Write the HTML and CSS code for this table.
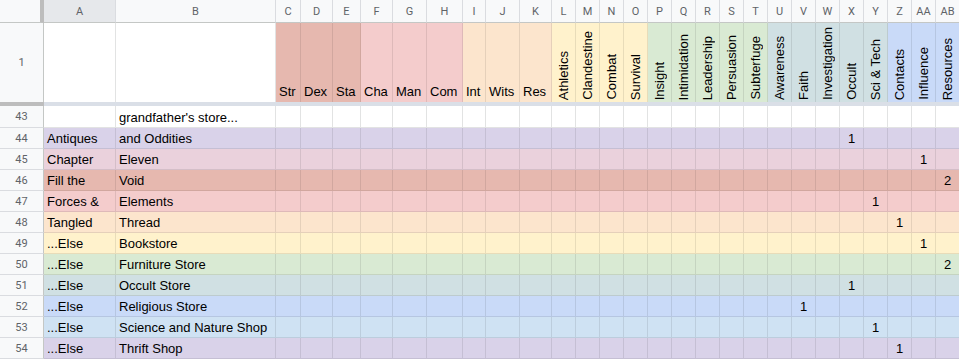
FILE: index.html
```html
<!DOCTYPE html>
<html>
<head>
<meta charset="utf-8">
<link rel="stylesheet" href="styles.css">
</head>
<body>
<div class="sheet">
  <div class="row cols colhead">
    <div class="corner"></div>
    <div class="sel">A</div><div>B</div><div>C</div><div>D</div><div>E</div><div>F</div><div>G</div><div>H</div><div>I</div><div>J</div><div>K</div><div>L</div><div>M</div><div>N</div><div>O</div><div>P</div><div>Q</div><div>R</div><div>S</div><div>T</div><div>U</div><div>V</div><div>W</div><div>X</div><div>Y</div><div>Z</div><div>AA</div><div>AB</div>
  </div>
  <div class="row cols r1">
    <div class="rh">1</div>
    <div class="blank"></div><div class="blank"></div>
    <div class="h phys"><span>Str</span></div><div class="h phys"><span>Dex</span></div><div class="h phys"><span>Sta</span></div>
    <div class="h soc"><span>Cha</span></div><div class="h soc"><span>Man</span></div><div class="h soc"><span>Com</span></div>
    <div class="h men"><span>Int</span></div><div class="h men"><span>Wits</span></div><div class="h men"><span>Res</span></div>
    <div class="v yel"><span>Athletics</span></div><div class="v yel"><span>Clandestine</span></div><div class="v yel"><span>Combat</span></div><div class="v yel"><span>Survival</span></div>
    <div class="v grn"><span>Insight</span></div><div class="v grn"><span>Intimidation</span></div><div class="v grn"><span>Leadership</span></div><div class="v grn"><span>Persuasion</span></div><div class="v grn"><span>Subterfuge</span></div>
    <div class="v cyn"><span>Awareness</span></div><div class="v cyn"><span>Faith</span></div><div class="v cyn"><span>Investigation</span></div><div class="v cyn"><span>Occult</span></div><div class="v cyn"><span>Sci &amp; Tech</span></div>
    <div class="v blu"><span>Contacts</span></div><div class="v blu"><span>Influence</span></div><div class="v blu"><span>Resources</span></div>
  </div>
  <div class="freeze"><div class="freeze-left"></div><div class="freeze-right"></div></div>
  <div class="row cols data r43 white">
    <div class="rh">43</div><div class="t"></div><div class="t">grandfather's store...</div>
    <div></div><div></div><div></div><div></div><div></div><div></div><div></div><div></div><div></div><div></div><div></div><div></div><div></div><div></div><div></div><div></div><div></div><div></div><div></div><div></div><div></div><div></div><div></div><div></div><div></div><div></div>
  </div>
  <div class="row cols data purple">
    <div class="rh">44</div><div class="t">Antiques</div><div class="t">and Oddities</div>
    <div></div><div></div><div></div><div></div><div></div><div></div><div></div><div></div><div></div><div></div><div></div><div></div><div></div><div></div><div></div><div></div><div></div><div></div><div></div><div></div><div></div><div class="n">1</div><div></div><div></div><div></div><div></div>
  </div>
  <div class="row cols data magenta">
    <div class="rh">45</div><div class="t">Chapter</div><div class="t">Eleven</div>
    <div></div><div></div><div></div><div></div><div></div><div></div><div></div><div></div><div></div><div></div><div></div><div></div><div></div><div></div><div></div><div></div><div></div><div></div><div></div><div></div><div></div><div></div><div></div><div></div><div class="n">1</div><div></div>
  </div>
  <div class="row cols data berry">
    <div class="rh">46</div><div class="t">Fill the</div><div class="t">Void</div>
    <div></div><div></div><div></div><div></div><div></div><div></div><div></div><div></div><div></div><div></div><div></div><div></div><div></div><div></div><div></div><div></div><div></div><div></div><div></div><div></div><div></div><div></div><div></div><div></div><div></div><div class="n">2</div>
  </div>
  <div class="row cols data red">
    <div class="rh">47</div><div class="t">Forces &amp;</div><div class="t">Elements</div>
    <div></div><div></div><div></div><div></div><div></div><div></div><div></div><div></div><div></div><div></div><div></div><div></div><div></div><div></div><div></div><div></div><div></div><div></div><div></div><div></div><div></div><div></div><div class="n">1</div><div></div><div></div><div></div>
  </div>
  <div class="row cols data orange">
    <div class="rh">48</div><div class="t">Tangled</div><div class="t">Thread</div>
    <div></div><div></div><div></div><div></div><div></div><div></div><div></div><div></div><div></div><div></div><div></div><div></div><div></div><div></div><div></div><div></div><div></div><div></div><div></div><div></div><div></div><div></div><div></div><div class="n">1</div><div></div><div></div>
  </div>
  <div class="row cols data yellow">
    <div class="rh">49</div><div class="t">...Else</div><div class="t">Bookstore</div>
    <div></div><div></div><div></div><div></div><div></div><div></div><div></div><div></div><div></div><div></div><div></div><div></div><div></div><div></div><div></div><div></div><div></div><div></div><div></div><div></div><div></div><div></div><div></div><div></div><div class="n">1</div><div></div>
  </div>
  <div class="row cols data green">
    <div class="rh">50</div><div class="t">...Else</div><div class="t">Furniture Store</div>
    <div></div><div></div><div></div><div></div><div></div><div></div><div></div><div></div><div></div><div></div><div></div><div></div><div></div><div></div><div></div><div></div><div></div><div></div><div></div><div></div><div></div><div></div><div></div><div></div><div></div><div class="n">2</div>
  </div>
  <div class="row cols data cyan">
    <div class="rh">51</div><div class="t">...Else</div><div class="t">Occult Store</div>
    <div></div><div></div><div></div><div></div><div></div><div></div><div></div><div></div><div></div><div></div><div></div><div></div><div></div><div></div><div></div><div></div><div></div><div></div><div></div><div></div><div></div><div class="n">1</div><div></div><div></div><div></div><div></div>
  </div>
  <div class="row cols data cornflower">
    <div class="rh">52</div><div class="t">...Else</div><div class="t">Religious Store</div>
    <div></div><div></div><div></div><div></div><div></div><div></div><div></div><div></div><div></div><div></div><div></div><div></div><div></div><div></div><div></div><div></div><div></div><div></div><div></div><div class="n">1</div><div></div><div></div><div></div><div></div><div></div><div></div>
  </div>
  <div class="row cols data blue">
    <div class="rh">53</div><div class="t">...Else</div><div class="t">Science and Nature Shop</div>
    <div></div><div></div><div></div><div></div><div></div><div></div><div></div><div></div><div></div><div></div><div></div><div></div><div></div><div></div><div></div><div></div><div></div><div></div><div></div><div></div><div></div><div></div><div class="n">1</div><div></div><div></div><div></div>
  </div>
  <div class="row cols data purple">
    <div class="rh">54</div><div class="t">...Else</div><div class="t">Thrift Shop</div>
    <div></div><div></div><div></div><div></div><div></div><div></div><div></div><div></div><div></div><div></div><div></div><div></div><div></div><div></div><div></div><div></div><div></div><div></div><div></div><div></div><div></div><div></div><div></div><div class="n">1</div><div></div><div></div>
  </div>
</div>
</body>
</html>
```
FILE: styles.css
```css
html, body {
  margin: 0;
  padding: 0;
  background: #ffffff;
}
body {
  width: 959px;
  height: 359px;
  overflow: hidden;
  font-family: "Liberation Sans", Arial, sans-serif;
  font-size: 13px;
  color: #000;
}
.sheet {
  width: 960px;
}
.cols {
  display: grid;
  grid-template-columns: 44px 72px 160px 25px 32px 28px 32px 34px 36px 23px 34px 32px repeat(17, 24px);
}
.row > div {
  box-sizing: border-box;
  min-width: 0;
  overflow: hidden;
  white-space: nowrap;
}

/* column letters */
.colhead {
  height: 23px;
  background: #f8f9fa;
}
.colhead > div {
  border-right: 1px solid #dadce0;
  border-bottom: 1px solid #c4c7c5;
  font-family: Roboto, "Liberation Sans", sans-serif;
  font-size: 11px;
  color: #5f6368;
  display: flex;
  align-items: center;
  justify-content: center;
}
.colhead > .corner {
  border-right: 4px solid #bdbdbd;
  border-bottom: 1px solid #c4c7c5;
}
.colhead > .sel {
  background: #e6e8eb;
}

/* row numbers */
.row > .rh {
  background: #f8f9fa;
  border-right: 1px solid #c4c7c5;
  border-bottom: 1px solid #dadce0;
  font-family: Roboto, "Liberation Sans", sans-serif;
  font-size: 11px;
  color: #5f6368;
  display: flex;
  align-items: center;
  justify-content: center;
}

/* row 1 (frozen header) */
.r1 {
  height: 79px;
}
.r1 > div {
  border-right: 1px solid rgba(0, 0, 0, 0.09);
}
.r1 > .rh {
  border-bottom: none;
}
.r1 > .blank {
  background: #fff;
  border-right: 1px solid #e2e3e3;
}
.h {
  display: flex;
  align-items: flex-end;
  padding: 0 0 2px 3px;
  line-height: 16px;
}
.v {
  display: flex;
  align-items: flex-end;
  justify-content: center;
  padding-bottom: 2px;
}
.v span {
  writing-mode: vertical-rl;
  transform: rotate(180deg);
  line-height: 16px;
  white-space: nowrap;
}
.phys { background: #e6b8af; }
.soc { background: #f4cccc; }
.men { background: #fce5cd; }
.yel { background: #fff2cc; }
.grn { background: #d9ead3; }
.cyn { background: #d0e0e3; }
.blu { background: #c9daf8; }

/* freeze bar */
.freeze {
  display: flex;
  height: 4px;
}
.freeze-left {
  width: 44px;
  background: #bdbdbd;
}
.freeze-right {
  flex: 1;
  background: #dadfe7;
}

/* data rows */
.data {
  height: 21px;
}
.r43 {
  height: 22px;
}
.data > div {
  border-right: 1px solid rgba(0, 0, 0, 0.09);
  border-bottom: 1px solid rgba(0, 0, 0, 0.09);
}
.white > div {
  border-color: #e2e3e3;
}
.data > .t {
  display: flex;
  align-items: flex-end;
  padding: 0 0 1px 3px;
  line-height: 16px;
}
.data > .n {
  display: flex;
  align-items: flex-end;
  justify-content: center;
  padding-bottom: 1px;
  line-height: 16px;
}
.white { background: #ffffff; }
.purple { background: #d9d2e9; }
.magenta { background: #ead1dc; }
.berry { background: #e6b8af; }
.red { background: #f4cccc; }
.orange { background: #fce5cd; }
.yellow { background: #fff2cc; }
.green { background: #d9ead3; }
.cyan { background: #d0e0e3; }
.cornflower { background: #c9daf8; }
.blue { background: #cfe2f3; }
```
